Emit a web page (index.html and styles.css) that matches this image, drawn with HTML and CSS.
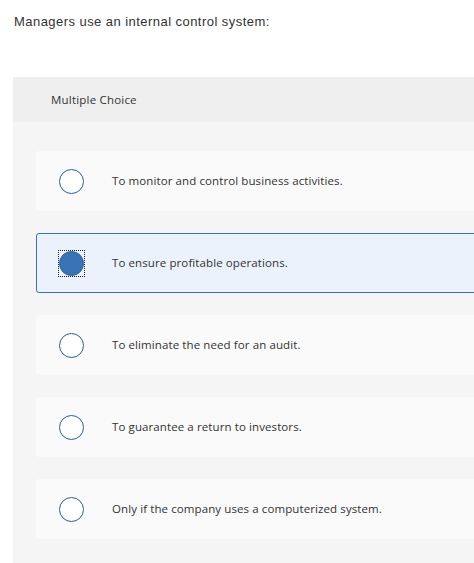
FILE: index.html
```html
<!DOCTYPE html>
<html>
<head>
<meta charset="utf-8">
<link rel="stylesheet" href="styles.css">
</head>
<body>
<div class="page">
  <p class="prompt">Managers use an internal control system:</p>
  <div class="panel">
    <div class="panel-header">Multiple Choice</div>
    <div class="options">
      <div class="option"><span class="focus"><span class="radio"></span></span><span class="label">To monitor and control business activities.</span></div>
      <div class="option selected"><span class="focus"><span class="radio"></span></span><span class="label">To ensure profitable operations.</span></div>
      <div class="option"><span class="focus"><span class="radio"></span></span><span class="label">To eliminate the need for an audit.</span></div>
      <div class="option"><span class="focus"><span class="radio"></span></span><span class="label">To guarantee a return to investors.</span></div>
      <div class="option"><span class="focus"><span class="radio"></span></span><span class="label">Only if the company uses a computerized system.</span></div>
    </div>
  </div>
</div>
</body>
</html>
```

FILE: styles.css
```css
html, body {
  margin: 0;
  padding: 0;
  background: #ffffff;
  overflow: hidden;
}
.page {
  width: 620px;
  padding: 14px 0 0 13px;
  font-family: "Liberation Sans", Arial, sans-serif;
  color: #333333;
}
.prompt {
  margin: 0 0 0 1px;
  font-size: 13px;
  line-height: 15px;
  letter-spacing: 0.45px;
}
.panel {
  margin-top: 48px;
  background: #f5f5f5;
}
.panel-header {
  height: 45px;
  background: #efefef;
  display: flex;
  align-items: center;
  padding-left: 38px;
  font-family: "Open Sans", sans-serif;
  font-size: 11.5px;
  letter-spacing: 0.2px;
  color: #333;
}
.options {
  display: flex;
  flex-direction: column;
  gap: 22px;
  padding: 29px 0 26px 23px;
}
.option {
  height: 60px;
  box-sizing: border-box;
  background: #fafafa;
  border-radius: 3px 0 0 3px;
  display: flex;
  align-items: center;
  padding-left: 22px;
  font-family: "Open Sans", sans-serif;
  font-size: 11.5px;
  letter-spacing: 0.1px;
  color: #333;
}
.option.selected {
  background: #ebf2fb;
  border: 1px solid #3b6fae;
  padding-left: 21px;
}
.focus {
  display: flex;
  border: 1px dotted transparent;
  flex: none;
  margin-right: 27px;
}
.selected .focus {
  border-color: #222;
}
.radio {
  width: 25px;
  height: 25px;
  box-sizing: border-box;
  border-radius: 50%;
  border: 1.5px solid #2e5e94;
  background: #ffffff;
}
.selected .radio {
  background: #3a72b6;
  border-color: #30649f;
}
.label {
  line-height: 14px;
  margin-bottom: 1px;
}
```
